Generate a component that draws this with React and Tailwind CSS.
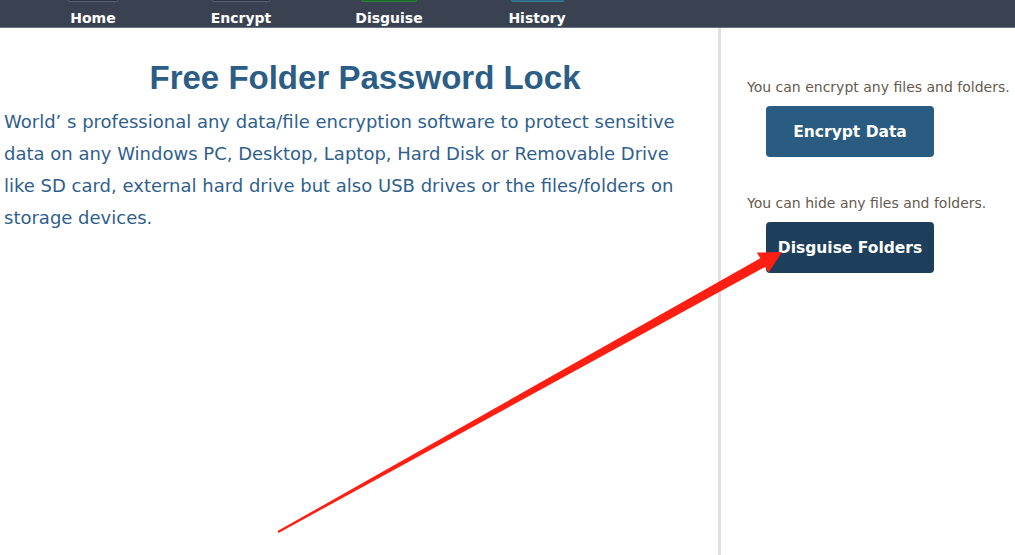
import React from 'react';

const navItems = [
  { id: 'home', label: 'Home', tab: 'bg-[#2b313c] border-[#596273]', tabWidth: 'w-[50px]' },
  { id: 'encrypt', label: 'Encrypt', tab: 'bg-[#2b313c] border-[#596273]', tabWidth: 'w-[58px]' },
  { id: 'disguise', label: 'Disguise', tab: 'bg-[#1f6a2c] border-[#2f7a3c]', tabWidth: 'w-[56px]' },
  { id: 'history', label: 'History', tab: 'bg-[#2c6a86] border-[#3b7a96]', tabWidth: 'w-[53px]' },
];

const bodyFont = { fontFamily: "Tahoma, 'DejaVu Sans', sans-serif" };

function Arrow() {
  // red annotation arrow drawn on top of the page
  return (
    <svg
      className="absolute left-0 top-0 pointer-events-none"
      width="1015"
      height="555"
      viewBox="0 0 1015 555"
    >
      <polygon
        points="277.5,531.1 760.3,258.2 756.8,252.6 782,252 768.6,272.6 765.1,267 278.5,532.9"
        fill="#ff1f12"
      />
    </svg>
  );
}

export default function App() {
  return (
    <div className="relative h-[555px] w-[1015px] overflow-hidden bg-white" style={bodyFont}>
      {/* Top nav */}
      <div className="flex h-[28px] bg-[#3a4252] border-b border-[#6a7384] pl-[19px]">
        {navItems.map((item) => (
          <div key={item.id} className="flex w-[148px] flex-col items-center">
            <div className={`h-[2px] ${item.tabWidth} rounded-b-[2px] border-b border-x ${item.tab}`} />
            <span className="mt-[8px] text-[14px] font-bold leading-[16px] text-white">
              {item.label}
            </span>
          </div>
        ))}
      </div>

      <div className="flex h-[527px]">
        {/* Main content */}
        <div className="w-[721px] border-r-[3px] border-[#e0e0e0] pl-[4px]">
          <h1
            className="mt-[32px] pl-[8px] text-center text-[33px] font-bold leading-[36px] text-[#2b5d86]"
            style={{ fontFamily: "'Liberation Sans', Arial, sans-serif" }}
          >
            Free Folder Password Lock
          </h1>
          <p className="mt-[10px] w-[690px] text-[18px] leading-[32px] text-[#30608c]">
            World’ s professional any data/file encryption software to protect sensitive data on any
            Windows PC, Desktop, Laptop, Hard Disk or Removable Drive like SD card, external hard
            drive but also USB drives or the files/folders on storage devices.
          </p>
        </div>

        {/* Side actions */}
        <div className="flex-1 pl-[26px] pt-[49px]">
          <p className="text-[14px] leading-[20px] text-[#665a4e] whitespace-nowrap">
            You can encrypt any files and folders.
          </p>
          <button className="ml-[19px] mt-[9px] flex h-[51px] w-[168px] items-center justify-center rounded-[4px] bg-[#2a5b80] pt-[2px] text-[15.5px] font-bold text-white">
            Encrypt Data
          </button>
          <p className="mt-[36px] text-[14px] leading-[20px] text-[#665a4e] whitespace-nowrap">
            You can hide any files and folders.
          </p>
          <button className="ml-[19px] mt-[9px] flex h-[51px] w-[168px] items-center justify-center rounded-[4px] bg-[#1e3f5b] pt-[2px] text-[15.5px] font-bold text-white">
            Disguise Folders
          </button>
        </div>
      </div>

      <Arrow />
    </div>
  );
}
